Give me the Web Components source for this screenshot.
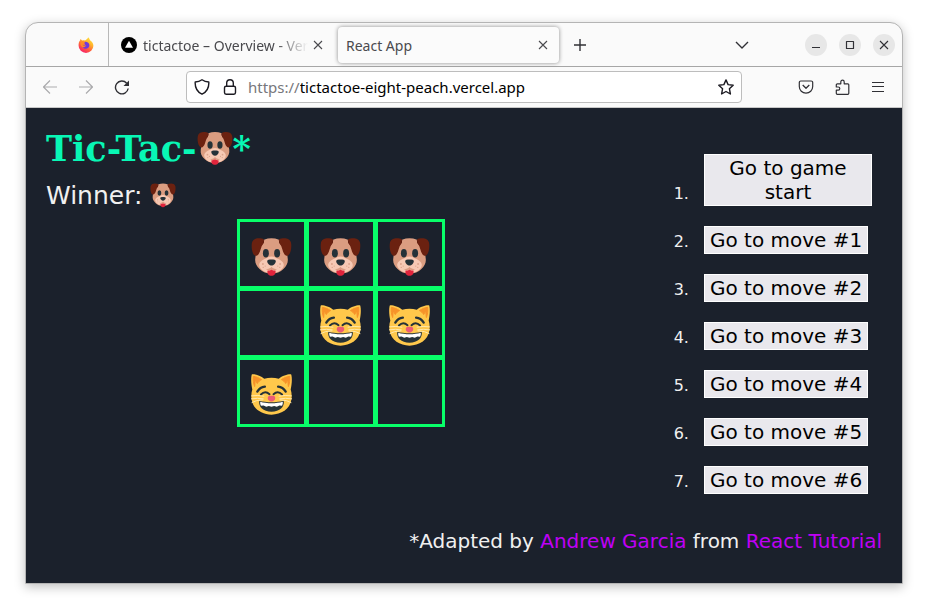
<!DOCTYPE html>
<html lang="en">
<head>
<meta charset="utf-8">
<title>React App</title>
<style>
body { margin: 0; background: #fff; font-family: "DejaVu Sans", sans-serif; }
</style>
</head>
<body>
<browser-window>
  <tab-strip slot="tabs"></tab-strip>
  <nav-toolbar slot="toolbar"></nav-toolbar>
  <tictactoe-app></tictactoe-app>
</browser-window>
<script>
const define = (name, html) => customElements.define(name, class extends HTMLElement {
  constructor() {
    super();
    this.attachShadow({ mode: "open" }).innerHTML = typeof html === "function" ? html(this) : html;
  }
});

const ICONS = {
  back: '<path d="M15 8H1.5M8 1.5 1.5 8 8 14.5" stroke-width="1.2"/>',
  forward: '<path d="M1 8h13.500M8 1.500 14.500 8 8 14.500" stroke-width="1.2"/>',
  reload: '<path d="M14.200 9.500A6.400 6.400 0 1 1 12.700 4.200" stroke-width="1.400"/><path d="M15 1.500v5.500H9.500z" fill="currentColor" stroke="none"/>',
  shield: '<path d="M8 .8c2 1.400 4.300 2.100 6.800 2.200.3 5.200-1.700 9.800-6.800 12.200C2.900 12.800.9 8.200 1.200 3 3.700 2.900 6 2.200 8 .8z" stroke-width="1.400"/>',
  lock: '<rect x="2.500" y="7.200" width="11" height="8" rx="1.600" stroke-width="1.400"/><path d="M4.700 7V4a3.300 3.300 0 0 1 6.600 0v3" stroke-width="1.400"/>',
  star: '<path d="m8 .9 2.100 4.700 5.100.6-3.800 3.500 1 5.300L8 12.500 3.600 15l1-5.300L.8 6.200l5.100-.6z" stroke-width="1.400"/>',
  pocket: '<path d="M2.800 2h10.400a1.500 1.500 0 0 1 1.500 1.500v4a6.700 6.700 0 0 1-13.400 0v-4A1.500 1.500 0 0 1 2.800 2z" stroke-width="1.200"/><path d="M4.700 6 8 9.200 11.300 6" stroke-width="1.300"/>',
  puzzle: '<path d="M3.300 15.300a1 1 0 0 1-1-1v-3.100h1.900a1.600 1.600 0 0 0 0-3.200H2.300V5.800a1 1 0 0 1 1-1h3.500V2.900a1.700 1.700 0 0 1 3.400 0v1.900h3.600a1 1 0 0 1 1 1v8.500a1 1 0 0 1-1 1z" stroke-width="1.200"/>',
  menu: '<path d="M2 3.500h12M2 7.500h12M2 12.500h12" stroke-width="1.200"/>',
  close: '<path d="m4 4 8 8m0-8-8 8" stroke-width="1.100"/>',
  plus: '<path d="M8 2v12M2 8h12" stroke-width="1.400"/>',
  chevron: '<path d="m2 5 6 6 6-6" stroke-width="1.400"/>',
  minimize: '<path d="M4 10.500h8" stroke-width="1.100"/>',
  maximize: '<path d="M4.500 4.500h7v7h-7z" stroke-width="1.200"/>',
  vercel: '<circle cx="8" cy="8" r="8" fill="#000" stroke="none"/><path d="m8 3.800 4 7H4z" fill="#fff" stroke="none"/>',
  firefox: '<defs><linearGradient id="f" x1=".85" y1="0" x2=".25" y2="1"><stop stop-color="#ffe83f"/><stop offset=".35" stop-color="#ffb52b"/><stop offset=".65" stop-color="#ff603c"/><stop offset="1" stop-color="#f6196f"/></linearGradient></defs><g stroke="none"><path d="M10.200.2c1 1 1.600 1.900 1.800 3 1.800 1.100 3.400 3.100 3.400 5.600a7.400 7.100 0 0 1-14.800 0C.5 6.500.9 4.800 2 3.500L2.500 2l1.700 1.500c1-.3 1.900-.3 2.800 0C8 2.700 9.400 2 10.200.2z" fill="url(#f)"/><path d="M5 5.500c2-1.700 6.400-.8 6.400 2.700 0 4-5.400 4.700-6.800 1.500l2 .1-1.500-1.300 2.100-.8C6.800 6.600 5.800 6 5 5.500z" fill="#7139dc"/><path d="M3.400 4.200c1.300-.6 2.900.4 3.500 1.500 0 1-2.600.8-2.300 2.300.1 1.300 2.300.8 3.300.1-.4 2.300-2.600 2.700-4 1.600C2 8.300 2 5.400 3.400 4.200z" fill="#ff8b26"/></g>'
};
define("ui-icon", el => `<style>
  :host { display: inline-flex; width: var(--icon, 16px); height: var(--icon, 16px); flex: none; }
  svg { width: 100%; height: 100%; }
</style><svg viewBox="0 0 16 16" fill="none" stroke="currentColor" stroke-linejoin="round" aria-hidden="true">${ICONS[el.getAttribute("name")]}</svg>`);

const FACES = {
  dog: `<svg viewBox="-2 -5 124 124" role="img" aria-label="Dog">
    <path d="M60 2c16 0 27 5 35 15 8 11 12 29 14 45 2 14-3 23-13 33-9 9-21 14-36 14s-27-5-36-14C14 85 9 76 11 62c2-16 6-34 14-45C33 7 44 2 60 2z" fill="#db9d81"/>
    <path d="M27 10 38 8c0 9-5 13-11 16zM93 10 82 8c0 9 5 13 11 16z" fill="#3d0f09"/>
    <path d="M37 5C27 1 5-1 1 15c-3 14 1 40 12 40 12 0 14-25 19-32 4-5 5-9 5-18z" fill="#6b2110"/>
    <path d="M83 5c10-4 32-6 36 10 3 14-1 40-12 40-12 0-14-25-19-32-4-5-5-9-5-18z" fill="#6b2110"/>
    <path d="M60 57c-8 0-11 3-17 6-11 4-22 12-20 22 4 14 18 22 37 22s33-8 37-22c2-10-9-18-20-22-6-3-9-6-17-6z" fill="#f7c9b4"/>
    <ellipse cx="43" cy="47" rx="9" ry="13" fill="#253238"/><ellipse cx="77" cy="47" rx="9" ry="13" fill="#253238"/>
    <path d="M47 71c0-4 6-5 13-5s13 1 13 5c0 6-7 13-13 13s-13-7-13-13z" fill="#253238"/>
    <path d="M42 94c8 2 14-1 18-6 4 5 10 8 18 6-5 5-12 5-18 2-6 3-13 3-18-2z" fill="#db9d81"/>
    <path d="M48 99c7 1 9-1 12-3 3 2 5 4 12 3 2 10-4 16-12 16s-14-6-12-16z" fill="#e0243c"/>
    <g fill="#dca48c"><circle cx="34" cy="80" r="3"/><circle cx="41" cy="86" r="2"/><circle cx="35" cy="90" r="2"/><circle cx="86" cy="80" r="3"/><circle cx="79" cy="86" r="2"/><circle cx="85" cy="90" r="2"/></g></svg>`,
  cat: `<svg viewBox="0 0 124 124" role="img" aria-label="Grinning cat">
    <path d="M2 2c2-4 26 2 38 12 14-4 30-4 44 0C96 4 120-2 122 2c3 14 1 31-2 45 3 9 4 20 2 31-4 28-31 45-60 45S6 106 2 78c-2-11-1-22 2-31C1 33-1 16 2 2z" fill="#ffc84b"/>
    <path d="M7 7c9 1 18 5 25 10-6 3-10 7-13 12-2-5-5-8-6-11-1 8-1 15-2 20C7 28 6 17 7 7zM117 7c-9 1-18 5-25 10 6 3 10 7 13 12 2-5 5-8 6-11 1 8 1 15 2 20 4-10 5-21 4-31z" fill="#f79329" stroke="#f79329" stroke-width="3"/>
    <g fill="none" stroke="#253238" stroke-linecap="round"><path d="M19 53c5-8 12-14 23-15M105 53c-5-8-12-14-23-15" stroke-width="7"/><path d="M30 62c8-8 18-8 26-1M94 62c-8-8-18-8-26-1" stroke-width="6"/></g>
    <path d="M25 81c20 6 54 6 74 0 3 19-12 33-37 33S22 100 25 81z" fill="#253238"/>
    <path d="M28 84c20 6 48 6 68 0 1 5-1 9-2 12l-8-1-8 4-8-2-8 2-8-2-8 2-8-4-8 1c-1-3-3-7-2-12z" fill="#fff"/>
    <path d="M51 70c0-6 22-6 22 0 2 7-5 13-11 13s-13-6-11-13z" fill="#ec5c75"/>
    <g fill="none" stroke="#ffe9ad" stroke-width="3" stroke-linecap="round"><path d="M2 66q19-3 37 1M1 75q19-3 36 0M3 86q11-7 33-8M122 66q-19-3-37 1M123 75q-19-3-36 0M121 86q-11-7-33-8"/></g></svg>`
};
define("emoji-face", el => `<style>
  :host { display: inline-block; width: var(--face, 41px); height: var(--face, 41px); }
  svg { display: block; width: 100%; height: 100%; }
</style>${FACES[el.getAttribute("kind")]}`);

define("icon-button", el => `<style>
  :host { display: inline-flex; flex: none; }
  button { width: var(--size, 28px); height: var(--size, 28px); padding: 0; border: 0; border-radius: var(--radius, 4px); background: var(--fill, transparent); color: inherit; display: flex; align-items: center; justify-content: center; }
</style><button type="button" aria-label="${el.getAttribute("label")}"><ui-icon name="${el.getAttribute("icon")}"></ui-icon></button>`);

define("browser-tab", `<style>
  :host { display: flex; align-items: center; box-sizing: border-box; height: 36px; flex: 0 1 221px; min-width: 0; padding: 0 2px 0 8px; gap: 6px; border-radius: 4px; font: 14px/20px "Noto Sans", sans-serif; color: #4a4a4e; }
  :host([active]) { background: #fbfbfb; box-shadow: 0 0 4px rgba(0,0,0,.45); }
  .label { flex: 1; min-width: 0; padding-top: 2px; overflow: hidden; white-space: nowrap; }
  :host(:not([active])) .label { margin-right: -6px; -webkit-mask-image: linear-gradient(to left, transparent, #000 32px); mask-image: linear-gradient(to left, transparent, #000 32px); }
  icon-button { --size: 20px; --icon: 16px; margin-right: 4px; }
</style><slot name="favicon"></slot><span class="label"><slot></slot></span><icon-button label="Close tab" icon="close"></icon-button>`);

define("tab-strip", `<style>
  :host { display: flex; align-items: center; height: 43px; padding-right: 7px; border-bottom: 1px solid #a6a6a6; color: #303035; }
  .pinned { box-sizing: border-box; width: 83px; height: 100%; padding-right: 14px; border-right: 1px solid #b8b8b8; display: flex; align-items: center; justify-content: flex-end; }
  .tabs { display: flex; gap: 4px; padding-left: 4px; flex: 0 1 446px; min-width: 0; }
  .new { margin-left: 7px; --icon: 16px; }
  .list { margin-left: auto; margin-right: 49px; --icon: 16px; }
  .controls { display: flex; gap: 12px; --size: 22px; --radius: 50%; --fill: #e7e7e7; }
</style>
<div class="pinned"><ui-icon name="firefox"></ui-icon></div>
<div class="tabs">
  <browser-tab><ui-icon slot="favicon" name="vercel"></ui-icon>tictactoe – Overview - Vercel</browser-tab>
  <browser-tab active>React App</browser-tab>
</div>
<icon-button class="new" label="New tab" icon="plus"></icon-button>
<icon-button class="list" label="List all tabs" icon="chevron"></icon-button>
<div class="controls">
  <icon-button label="Minimize" icon="minimize"></icon-button>
  <icon-button label="Maximize" icon="maximize"></icon-button>
  <icon-button label="Close" icon="close"></icon-button>
</div>`);

define("address-bar", `<style>
  :host { display: flex; align-items: center; box-sizing: border-box; height: 32px; min-width: 0; padding: 0 7px; border: 1px solid #bdbdbd; border-radius: 4px; background: #fff; color: #1c1b22; font: 15px/20px "Noto Sans", sans-serif; }
  .lock { margin: 0 10px 0 12px; }
  label { color: #77777c; }
  input { flex: 1; min-width: 0; padding: 0; border: 0; outline: 0; background: transparent; color: #000; font: inherit; }
</style><ui-icon name="shield"></ui-icon><ui-icon class="lock" name="lock"></ui-icon><label for="url">https://</label><input id="url" value="tictactoe-eight-peach.vercel.app"><ui-icon name="star"></ui-icon>`);

define("nav-toolbar", `<style>
  :host { display: grid; grid-template-columns: 150px minmax(0, 1fr) 150px; align-items: center; height: 40px; padding: 0 10px; border-bottom: 1px solid #c8c8c8; color: #303035; }
  div { display: flex; gap: 8px; }
  .end { justify-content: flex-end; --icon: 16px; }
  .off { color: #ababad; }
</style>
<div><icon-button class="off" label="Back" icon="back"></icon-button><icon-button class="off" label="Forward" icon="forward"></icon-button><icon-button label="Reload" icon="reload"></icon-button></div>
<address-bar></address-bar>
<div class="end"><icon-button label="Save to Pocket" icon="pocket"></icon-button><icon-button label="Extensions" icon="puzzle"></icon-button><icon-button label="Menu" icon="menu"></icon-button></div>`);

define("game-square", `<style>
  :host { display: block; margin: 0 -1px -1px 0; }
  button { box-sizing: border-box; width: 70px; height: 70px; padding: 5px 0 0; border: 3px solid #08ff69; background: transparent; display: flex; align-items: center; justify-content: center; }
</style><button type="button" aria-label="Square"><slot></slot></button>`);

define("game-board", `<style>
  :host { display: grid; grid-template-columns: repeat(3, 69px); padding: 0 1px 1px 0; }
</style>${["dog", "dog", "dog", "", "cat", "cat", "cat", "", ""].map(k => `<game-square>${k && `<emoji-face kind="${k}"></emoji-face>`}</game-square>`).join("")}`);

define("move-list", `<style>
  :host { display: block; }
  ol { margin: 0; padding: 0 10px 0 59px; font-size: 16px; line-height: 24px; }
  li { padding-left: 10px; margin-bottom: 20px; }
  button { display: inline-block; vertical-align: baseline; padding: 1px 5px; border: 1px solid #fff; background: #e9e8ed; color: #000; font: 20px/24px "DejaVu Sans", sans-serif; }
</style><ol>${["game start", "move #1", "move #2", "move #3", "move #4", "move #5", "move #6"].map(t => `<li><button type="button">Go to ${t}</button></li>`).join("")}</ol>`);

define("tictactoe-app", `<style>
  :host { display: flex; flex-direction: column; flex: 1; padding: 20px; background: #1b212c; color: #f0f0f0; }
  .game { display: flex; }
  section { flex: 1; min-width: 0; display: flex; flex-direction: column; }
  h1 { margin: 0; color: #08f7b5; font: bold 35px/42px "DejaVu Serif", serif; --face: 36px; }
  h1 emoji-face { vertical-align: -5px; }
  p { margin: 11px 0 9px; font-size: 25px; line-height: 29px; --face: 26px; }
  p emoji-face { vertical-align: -4px; }
  game-board { align-self: center; }
  move-list { width: 247px; padding-top: 26px; flex: none; }
  footer { margin-top: 15px; text-align: right; font-size: 20px; line-height: 24px; }
  a { color: #bf00f5; text-decoration: none; }
</style>
<div class="game">
  <section>
    <h1>Tic-Tac-<emoji-face kind="dog"></emoji-face>*</h1>
    <p>Winner: <emoji-face kind="dog"></emoji-face></p>
    <game-board></game-board>
  </section>
  <move-list></move-list>
</div>
<footer>*Adapted by <a href="#author">Andrew Garcia</a> from <a href="#tutorial">React Tutorial</a></footer>`);

define("browser-window", `<style>
  :host { display: flex; flex-direction: column; box-sizing: border-box; min-height: calc(100vh - 50px); margin: 22px 25px 28px; border: 1px solid #b4b4b4; border-radius: 13px 13px 0 0; overflow: hidden; background: #fafafa; box-shadow: 0 3px 11px rgba(0,0,0,.25); }
</style><slot name="tabs"></slot><slot name="toolbar"></slot><slot></slot>`);
</script>
</body>
</html>
